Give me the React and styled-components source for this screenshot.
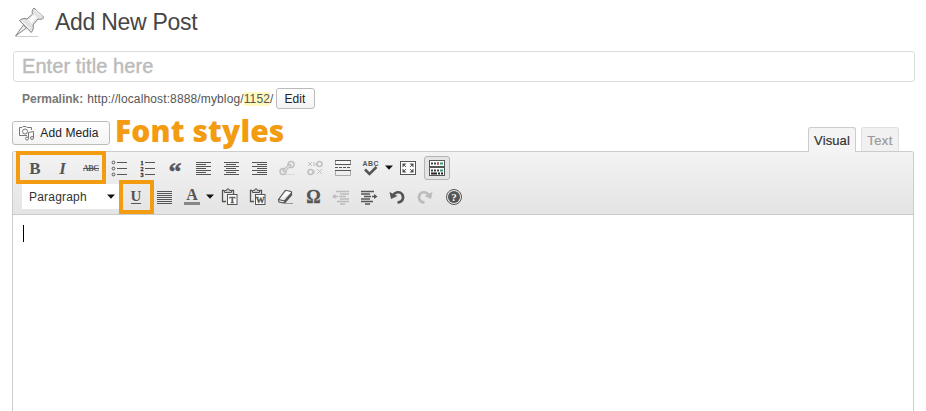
import React from "react";
import styled, { createGlobalStyle } from "styled-components";

const Global = createGlobalStyle`
  * { box-sizing: border-box; }
  body { margin: 0; background: #fff; font-family: "Liberation Sans", Arial, sans-serif; color: #333; overflow: hidden; }
`;

const Page = styled.main`
  width: 926px;
  height: 411px;
  overflow: hidden;
  display: flex;
  flex-direction: column;
  padding: 0 12px;
`;

const Header = styled.header`
  height: 51px;
  flex: none;
  display: flex;
  align-items: flex-start;
  padding-top: 4px;
  gap: 8px;
`;

const Heading = styled.h1`
  margin: 3px 0 0;
  font: 400 23px/30px "Liberation Sans", Arial, sans-serif;
  letter-spacing: -0.28px;
  color: #464646;
  white-space: nowrap;
`;

const TitleField = styled.div`
  flex: none;
  width: 902px;
  height: 31px;
  margin-left: 1px;
  border: 1px solid #dcdcdc;
  border-radius: 3px;
  padding-left: 8px;
  font-size: 20px;
  line-height: 29px;
  letter-spacing: 0.08px;
  color: #bbb;
  -webkit-text-stroke: 0.4px #bbb;
`;

const Permalink = styled.div`
  flex: none;
  height: 33px;
  margin: 6px 0 0 10px;
  display: flex;
  align-items: flex-start;
  font-size: 12px;
  line-height: 23px;
  white-space: nowrap;
  color: #555;
`;

const PermalinkLabel = styled.strong`
  color: #777;
  letter-spacing: -0.02px;
  margin-right: 4px;
`;

const Address = styled.span`
  letter-spacing: 0.13px;
`;

const Slug = styled.span`
  background: #fef8bd;
`;

const Button = styled.button`
  width: ${(p) => p.$width}px;
  height: ${(p) => p.$height}px;
  padding: 0;
  display: flex;
  align-items: center;
  justify-content: center;
  gap: 5px;
  border: 1px solid #bbb;
  border-radius: 3px;
  background: linear-gradient(#fefefe, #f4f4f4);
  font: 12px "Liberation Sans", Arial, sans-serif;
  color: #222;
  margin-left: ${(p) => p.$gap || 0}px;
  padding-right: ${(p) => p.$inset || 0}px;
  letter-spacing: 0.1px;
`;

const MediaRow = styled.div`
  flex: none;
  height: 30px;
  display: flex;
`;

const Annotation = styled.span`
  margin: -8px 0 0 5px;
  font: 800 30px/36px "Open Sans", sans-serif;
  letter-spacing: 0.1px;
  color: #f39c12;
  white-space: nowrap;
`;

const Tabs = styled.div`
  margin-left: auto;
  padding: 6px 15px 0 0;
  display: flex;
  gap: 5px;
  z-index: 1;
`;

const Tab = styled.div`
  width: ${(p) => p.$width}px;
  height: ${(p) => (p.$active ? 25 : 24)}px;
  border: 1px solid ${(p) => (p.$active ? "#ccc" : "#dfdfdf")};
  border-bottom: 0;
  border-radius: 3px 3px 0 0;
  background: ${(p) => (p.$active ? "#f4f4f4" : "#f1f1f1")};
  color: ${(p) => (p.$active ? "#333" : "#999")};
  font-size: 13px;
  line-height: 25px;
  text-align: center;
  letter-spacing: ${(p) => (p.$active ? 0.1 : 0.4)}px;
  -webkit-text-stroke: 0.2px;
`;

const Editor = styled.section`
  position: relative;
  width: 902px;
  flex: 1;
  border: 1px solid #ccc;
  border-bottom: 0;
  border-radius: 3px 3px 0 0;
`;

const Toolbar = styled.div`
  height: 63px;
  border-bottom: 1px solid #ccc;
  border-radius: 2px 2px 0 0;
  background: linear-gradient(#f3f3f3, #e4e4e4);
  padding: 1px 0 0 8px;
`;

const ToolRow = styled.div`
  height: 29px;
  display: flex;
  align-items: center;
`;

const Tool = styled.span`
  width: ${(p) => p.$width || 28}px;
  height: 28px;
  display: flex;
  align-items: center;
  justify-content: center;
  flex: none;
  opacity: ${(p) => (p.$disabled ? 0.3 : 1)};
`;

const Pressed = styled.span`
  width: 26px;
  height: 24px;
  display: flex;
  align-items: center;
  justify-content: center;
  border: 1px solid #b4b4b4;
  border-radius: 3px;
  background: #e4e4e4;
`;

const FormatSelect = styled.div`
  width: 97px;
  height: 25px;
  margin: 0 3px 0 1px;
  padding: 0 4px 0 7px;
  display: flex;
  align-items: center;
  justify-content: space-between;
  background: #fff;
  font-size: 12px;
  letter-spacing: 0.2px;
  color: #333;
`;

const Frame = styled.div`
  position: absolute;
  left: ${(p) => p.$x}px;
  top: ${(p) => p.$y}px;
  width: ${(p) => p.$w}px;
  height: ${(p) => p.$h}px;
  border: 4px solid #f39c12;
`;

const Caret = styled.div`
  width: 1px;
  height: 17px;
  margin: 10px 0 0 10px;
  background: #000;
`;

const Glyph = styled.svg`
  display: block;
  flex: none;
  overflow: visible;
  font-family: "Liberation Serif", serif;
  font-weight: bold;
  text-anchor: middle;
`;

const Icon = ({ children }) => (
  <Glyph width="20" height="20" viewBox="0 0 20 20" fill="none" stroke="#555" strokeWidth="1">
    {children}
  </Glyph>
);

const Letter = ({ x = 10, y, size, children, ...rest }) => (
  <text x={x} y={y} fontSize={size} fill="#555" stroke="none" {...rest}>{children}</text>
);

const Arrow = () => (
  <Glyph width="8" height="5" viewBox="0 0 8 5"><path d="M0 .5h8L4 4.7z" fill="#111" /></Glyph>
);

const Pin = () => (
  <Glyph width="35" height="36" viewBox="0 0 35 36" fill="none">
    <path d="M4 32.500h22" stroke="#ccc" />
    <path d="M3.500 32 11.500 21l3 3z" fill="#eee" stroke="#888" />
    <path d="M7.500 16.500c2-2 5-2.500 7.500-1.500l5.500-5c-.8-1.800-.3-4.500 1.500-6l10 9.500c-1.500 1.800-4 2.200-6 1.500l-5 6c.7 2.800.2 5.500-1.800 7.500z" fill="#e2e2e2" stroke="#858585" />
    <path d="m16 16 6-5.500 3 3-5.500 6z" fill="#fafafa" />
    <path d="m23.500 6 6.500 6.500M10 17l8 8" stroke="#f8f8f8" />
  </Glyph>
);

const MediaIcon = () => (
  <Glyph width="16" height="16" viewBox="0 0 16 16" fill="none" stroke="#777">
    <path d="M8 10.500H.5v-8H3l1-1h3l1 1h4.500V5" />
    <circle cx="6" cy="6.500" r="2.500" />
    <path d="M9.500 13V7.500l5-1V12" />
    <circle cx="8" cy="13.500" r="1.500" /><circle cx="13" cy="13" r="1.500" />
  </Glyph>
);

const Lines = ({ align }) => (
  <Icon>
    {[0, 1, 2, 3, 4, 5, 6].map((i) => {
      const w = align !== "justify" && i % 2 ? 10 : 15;
      const x = align === "right" ? 18 - w : align === "center" ? 3 + Math.floor((15 - w) / 2) : 3;
      return <path key={i} d={`M${x} ${4.5 + i * 2}h${w}`} />;
    })}
  </Icon>
);

const Chain = ({ broken }) => (
  <Icon>
    {broken ? (
      <>
        <circle cx="14.500" cy="6" r="2.500" strokeWidth="1.500" />
        <circle cx="5.500" cy="14" r="2.500" strokeWidth="1.500" />
        <path d="m3 4 4 4m0-4L3 8M9 4v4m2-3v3M9 12v4m3-5 5 5m0-5-5 5" />
      </>
    ) : (
      <>
        <circle cx="14" cy="6.500" r="3" strokeWidth="1.500" />
        <circle cx="6" cy="13.500" r="3" strokeWidth="1.500" />
        <path d="m6 13.500 8-7" strokeWidth="3" /><path d="m7 12.700 6-5.200" stroke="#eee" />
        <path d="M9 16.500h9" stroke="#bbb" />
      </>
    )}
  </Icon>
);

const List = ({ ordered }) => (
  <Icon>
    {[4.5, 10.5, 16.5].map((y, i) => (
      <g key={y}>
        <path d={`M8 ${y}h10`} />
        {ordered ? <Letter x={5} y={y + 2} size="6" fill="#333" stroke="#333" strokeWidth=".3">{i + 1}</Letter> : <circle cx="4.500" cy={y} r="1.400" />}
      </g>
    ))}
  </Icon>
);

const Clipboard = ({ letter }) => (
  <Icon>
    <path d="M7 14.500H3.500v-11H5m7 0h2.500V7" strokeWidth="1.300" />
    <path d="M5.500 5.500v-2h2l.5-1.500h2l.5 1.500h2v2z" fill="#ccc" />
    <rect x="8.500" y="7.500" width="9.500" height="10" fill="#fff" />
    <Letter x={13.2} y={15.8} size="9" stroke="#555" strokeWidth=".3">{letter}</Letter>
  </Icon>
);

const Indent = ({ out }) => (
  <Icon>
    <g transform={out ? "translate(20 0) scale(-1 1)" : undefined}>
      <path d="M2 4.500h13M2 7h9M5 9.500h7M2 12h9M2 14.500h12M6 17h5" strokeWidth="1.600" />
    </g>
    <path d={out ? "M7 9.500H2" : "M13 9.500h4"} strokeWidth="1.500" />
    <path d={out ? "M1 9.500 4.500 7v5z" : "M18.500 9.500 15 7v5z"} fill="#555" stroke="none" />
  </Icon>
);

const Undo = ({ flip }) => (
  <Icon>
    <g transform={flip ? "translate(20 0) scale(-1 1)" : undefined}>
      <path d="M6 8.500C8 5 12.500 4 15 7c2.500 4 .5 8-4.500 8.500" strokeWidth="2.600" />
      <path d="m2.500 5 1.500 7 6.500-3z" fill="#555" stroke="none" />
    </g>
  </Icon>
);

const PageBreak = () => (
  <Icon>
    <path d="M2.500 6.500v-4h15v4z" fill="#f8f8f8" stroke="#999" />
    <path d="M2 2.500h16M2 6.500h16M2 12.500h16" />
    <path d="M2.500 13v4.500h15V13" stroke="#aaa" />
    <path d="M2 9.500h16" strokeDasharray="3 1" />
  </Icon>
);

const Fullscreen = () => (
  <Icon>
    <rect x="2.500" y="3.500" width="15" height="13" fill="#fff" />
    <path d="M4.500 5.500h4l-4 4zM15.500 5.500h-4l4 4zM4.500 14.500h4l-4-4zM15.500 14.500h-4l4-4z" fill="#555" stroke="none" />
    <path d="m6 7 2 2M14 7l-2 2M6 13l2-2M14 13l-2-2" />
  </Icon>
);

const KitchenSink = () => (
  <Icon>
    <rect x="2.500" y="2.500" width="15" height="6" fill="#fff" />
    <rect x="2.500" y="9.500" width="15" height="8" fill="#fff" />
    <path d="M4 5.500h9M4 12.500h9" stroke="#444" strokeWidth="2" strokeDasharray="2 1" />
    <path d="M10 5.500h2" stroke="#b85c4a" strokeWidth="2" />
    <path d="M13 5.500h3M13 12.500h3" stroke="#2a9a78" strokeWidth="2" />
    <path d="M4 15.500h6m1 0h2m1 0h2" stroke="#222" strokeWidth="2" />
  </Icon>
);

export default function App() {
  return (
    <>
      <Global />
      <Page>
        <Header><Pin /><Heading>Add New Post</Heading></Header>
        <TitleField>Enter title here</TitleField>
        <Permalink>
          <PermalinkLabel>Permalink:</PermalinkLabel>
          <Address>http://localhost:8888/myblog/<Slug>1152</Slug>/</Address>
          <Button $width={39} $height={21} $gap={2}>Edit</Button>
        </Permalink>
        <MediaRow>
          <Button $width={98} $height={24} $inset={4}><MediaIcon />Add Media</Button>
          <Annotation>Font styles</Annotation>
          <Tabs><Tab $width={48} $active>Visual</Tab><Tab $width={38}>Text</Tab></Tabs>
        </MediaRow>
        <Editor>
          <Toolbar>
            <ToolRow>
              <Tool><Icon><Letter y={16} size="17">B</Letter></Icon></Tool>
              <Tool><Icon><Letter x={9.5} y={16} size="17" fontStyle="italic">I</Letter></Icon></Tool>
              <Tool><Icon><Letter y={13} size="8" textLength="16">ABC</Letter><path d="M2 10.500h16" /></Icon></Tool>
              <Tool><List /></Tool>
              <Tool><List ordered /></Tool>
              <Tool><Icon><Letter y={21.5} size="26" stroke="#555" strokeWidth=".4">“</Letter></Icon></Tool>
              <Tool><Lines align="left" /></Tool>
              <Tool><Lines align="center" /></Tool>
              <Tool><Lines align="right" /></Tool>
              <Tool $disabled><Chain /></Tool>
              <Tool $disabled><Chain broken /></Tool>
              <Tool><PageBreak /></Tool>
              <Tool><Icon><Letter x={9.5} y={8} size="7" fontFamily="Liberation Sans" textLength="16">ABC</Letter><path d="m4 11.500 4.500 4.500 7-7" strokeWidth="2.500" /></Icon></Tool>
              <Tool $width={8}><Arrow /></Tool>
              <Tool $width={30}><Fullscreen /></Tool>
              <Tool><Pressed><KitchenSink /></Pressed></Tool>
            </ToolRow>
            <ToolRow>
              <FormatSelect>Paragraph<Arrow /></FormatSelect>
              <Tool><Icon><Letter y={14} size="15">U</Letter><path d="M5 16.500h10" /></Icon></Tool>
              <Tool><Lines align="justify" /></Tool>
              <Tool $width={27}><Icon><Letter y={12.5} size="16">A</Letter><path d="M2 16.500h16" stroke="#888" strokeWidth="3" /></Icon></Tool>
              <Tool $width={10}><Arrow /></Tool>
              <Tool><Clipboard letter="T" /></Tool>
              <Tool><Clipboard letter="W" /></Tool>
              <Tool><Icon><path d="M3.500 12.500 10 4q.7-.8 1.500-.5l4.500 1q1 .5.500 1.500v2l-7 8-5.500-1zM3.500 12.500l6 1.500 7-8M9.500 14v2" fill="#fff" strokeWidth="1.200" /><path d="M9 16.500h9" stroke="#999" /></Icon></Tool>
              <Tool><Icon><Letter x={10.5} y={16} size="18" stroke="#555" strokeWidth=".3">Ω</Letter></Icon></Tool>
              <Tool $disabled><Indent out /></Tool>
              <Tool><Indent /></Tool>
              <Tool><Undo /></Tool>
              <Tool $disabled><Undo flip /></Tool>
              <Tool><Icon><circle cx="11" cy="10" r="7.500" /><circle cx="11" cy="10" r="6" fill="#555" stroke="none" /><Letter x={11} y={14} size="11" fill="#fff">?</Letter></Icon></Tool>
            </ToolRow>
          </Toolbar>
          <Caret />
          <Frame $x={3} $y={-1} $w={90} $h={33} />
          <Frame $x={106} $y={28} $w={35} $h={34} />
        </Editor>
      </Page>
    </>
  );
}
